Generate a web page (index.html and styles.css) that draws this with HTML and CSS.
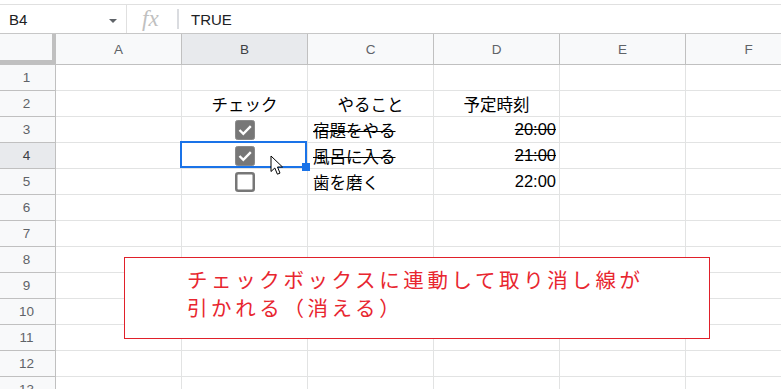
FILE: index.html
```html
<!DOCTYPE html>
<html lang="ja">
<head>
    <meta charset="UTF-8">
    <title>Sheet</title>
    <link rel="stylesheet" href="styles.css">
</head>
<body>
<div class="page">

    <!-- Formula bar -->
    <div class="formula-bar">
        <div class="name-box">
            <span>B4</span>
            <span class="caret"></span>
        </div>
        <div class="fx">fx</div>
        <div class="formula">TRUE</div>
    </div>

    <!-- Grid -->
    <div class="sheet">
        <div class="corner"></div>
        <div class="col-head">A</div>
        <div class="col-head active">B</div>
        <div class="col-head">C</div>
        <div class="col-head">D</div>
        <div class="col-head">E</div>
        <div class="col-head">F</div>

        <div class="row-head">1</div>
        <div class="cell"></div><div class="cell"></div><div class="cell"></div><div class="cell"></div><div class="cell"></div><div class="cell"></div>

        <div class="row-head">2</div>
        <div class="cell"></div>
        <div class="cell center">チェック</div>
        <div class="cell center">やること</div>
        <div class="cell center">予定時刻</div>
        <div class="cell"></div><div class="cell"></div>

        <div class="row-head">3</div>
        <div class="cell"></div>
        <div class="cell center">
            <svg class="checkbox" width="20" height="20" viewBox="0 0 20 20"><rect x="0.5" y="0.5" width="19" height="19" rx="2" fill="#777" stroke="#8a8a8a"/><path d="M4.5 10 L8.3 13.8 L15.8 6.2" fill="none" stroke="#fff" stroke-width="2.4"/></svg>
        </div>
        <div class="cell done">宿題をやる</div>
        <div class="cell right done">20:00</div>
        <div class="cell"></div><div class="cell"></div>

        <div class="row-head active">4</div>
        <div class="cell"></div>
        <div class="cell center">
            <svg class="checkbox" width="20" height="20" viewBox="0 0 20 20"><rect x="0.5" y="0.5" width="19" height="19" rx="2" fill="#777" stroke="#8a8a8a"/><path d="M4.5 10 L8.3 13.8 L15.8 6.2" fill="none" stroke="#fff" stroke-width="2.4"/></svg>
        </div>
        <div class="cell done">風呂に入る</div>
        <div class="cell right done">21:00</div>
        <div class="cell"></div><div class="cell"></div>

        <div class="row-head">5</div>
        <div class="cell"></div>
        <div class="cell center">
            <svg class="checkbox" width="20" height="20" viewBox="0 0 20 20"><rect x="1.25" y="1.25" width="17.5" height="17.5" rx="2" fill="#fff" stroke="#777" stroke-width="2.5"/></svg>
        </div>
        <div class="cell">歯を磨く</div>
        <div class="cell right">22:00</div>
        <div class="cell"></div><div class="cell"></div>

        <div class="row-head">6</div>
        <div class="cell"></div><div class="cell"></div><div class="cell"></div><div class="cell"></div><div class="cell"></div><div class="cell"></div>
        <div class="row-head">7</div>
        <div class="cell"></div><div class="cell"></div><div class="cell"></div><div class="cell"></div><div class="cell"></div><div class="cell"></div>
        <div class="row-head">8</div>
        <div class="cell"></div><div class="cell"></div><div class="cell"></div><div class="cell"></div><div class="cell"></div><div class="cell"></div>
        <div class="row-head">9</div>
        <div class="cell"></div><div class="cell"></div><div class="cell"></div><div class="cell"></div><div class="cell"></div><div class="cell"></div>
        <div class="row-head">10</div>
        <div class="cell"></div><div class="cell"></div><div class="cell"></div><div class="cell"></div><div class="cell"></div><div class="cell"></div>
        <div class="row-head">11</div>
        <div class="cell"></div><div class="cell"></div><div class="cell"></div><div class="cell"></div><div class="cell"></div><div class="cell"></div>
        <div class="row-head">12</div>
        <div class="cell"></div><div class="cell"></div><div class="cell"></div><div class="cell"></div><div class="cell"></div><div class="cell"></div>
        <div class="row-head">13</div>
        <div class="cell"></div><div class="cell"></div><div class="cell"></div><div class="cell"></div><div class="cell"></div><div class="cell"></div>
    </div>

    <!-- Selection on B4 -->
    <div class="selection"></div>
    <div class="fill-handle"></div>

    <!-- Mouse pointer -->
    <svg class="pointer" width="14" height="21" viewBox="0 0 14 21">
        <path d="M1 1 L1 16.5 L4.8 13 L7.4 19.2 L10 18.1 L7.5 12 L12.5 12 Z" fill="#fff" stroke="#000" stroke-width="1" stroke-linejoin="round"/>
    </svg>

    <!-- Note -->
    <div class="note">
        チェックボックスに連動して取り消し線が<br>
        引かれる（消える）
    </div>
</div>
</body>
</html>
```

FILE: styles.css
```css
html, body {
    margin: 0;
    background-color: #ffffff;
    overflow: hidden;
}

.page {
    position: relative;
    width: 781px;
    height: 389px;
    padding-top: 4px;
    box-sizing: border-box;
    overflow: hidden;
    font-family: 'Liberation Sans', 'Noto Sans CJK JP', sans-serif;
}

/* Formula bar */
.formula-bar {
    display: flex;
    align-items: center;
    height: 30px;
    box-sizing: border-box;
    border-top: 1px solid #e0e0e0;
    border-bottom: 1px solid #c7c7c7;
    font-size: 15px;
    color: #202124;
}

.name-box {
    display: flex;
    align-items: center;
    justify-content: space-between;
    width: 127px;
    height: 100%;
    box-sizing: border-box;
    padding: 0 9px 0 9px;
    border-right: 1px solid #e0e0e0;
}

.caret {
    width: 0;
    height: 0;
    border-left: 4px solid transparent;
    border-right: 4px solid transparent;
    border-top: 4px solid #5f6368;
    margin-top: 3px;
}

.fx {
    width: 52px;
    height: 20px;
    line-height: 20px;
    box-sizing: border-box;
    padding-left: 15px;
    border-right: 2px solid #dadce0;
    font-family: 'Liberation Serif', serif;
    font-style: italic;
    font-size: 23px;
    color: #c0c0c0;
}

.formula {
    padding-left: 12px;
}

/* Grid */
.sheet {
    display: grid;
    grid-template-columns: 56px repeat(6, 126px);
    grid-template-rows: 31px repeat(13, 26px);
    width: 812px;
}

.sheet > div {
    box-sizing: border-box;
    border-right: 1px solid #e2e3e3;
    border-bottom: 1px solid #e2e3e3;
}

.corner {
    background-color: #f8f9fa;
    border-right: 4px solid #c0c0c0 !important;
    border-bottom: 5px solid #c0c0c0 !important;
}

.col-head, .row-head {
    display: flex;
    align-items: center;
    justify-content: center;
    background-color: #f8f9fa;
    color: #5f6368;
    font-size: 13.5px;
}

.col-head {
    border-right-color: #c0c0c0 !important;
    border-bottom-color: #c0c0c0 !important;
}

.row-head {
    border-right-color: #c0c0c0 !important;
    border-bottom-color: #c0c0c0 !important;
    padding-right: 2px;
}

.col-head.active, .row-head.active {
    background-color: #e8eaed;
    color: #3c4043;
}

.cell {
    display: flex;
    align-items: center;
    padding: 0 5px;
    font-size: 16.5px;
    color: #000000;
    white-space: nowrap;
}

.cell.center {
    justify-content: center;
}

.cell.right {
    justify-content: flex-end;
    padding-right: 3px;
}

.cell.done {
    text-decoration: line-through;
}

.checkbox {
    display: block;
}

/* Selection */
.selection {
    position: absolute;
    left: 180px;
    top: 141px;
    width: 127px;
    height: 27px;
    box-sizing: border-box;
    border: 2px solid #1a73e8;
}

.fill-handle {
    position: absolute;
    left: 302px;
    top: 163px;
    width: 8px;
    height: 8px;
    background-color: #1a73e8;
}

.pointer {
    position: absolute;
    left: 270px;
    top: 155px;
}

/* Note box */
.note {
    position: absolute;
    left: 124px;
    top: 257px;
    width: 586px;
    height: 82px;
    box-sizing: border-box;
    padding: 7px 0 0 62px;
    border: 1px solid #e0202a;
    background-color: #ffffff;
    font-family: 'Noto Sans CJK JP', sans-serif;
    font-size: 20.5px;
    letter-spacing: 3.6px;
    line-height: 28px;
    color: #e8262f;
}
```
